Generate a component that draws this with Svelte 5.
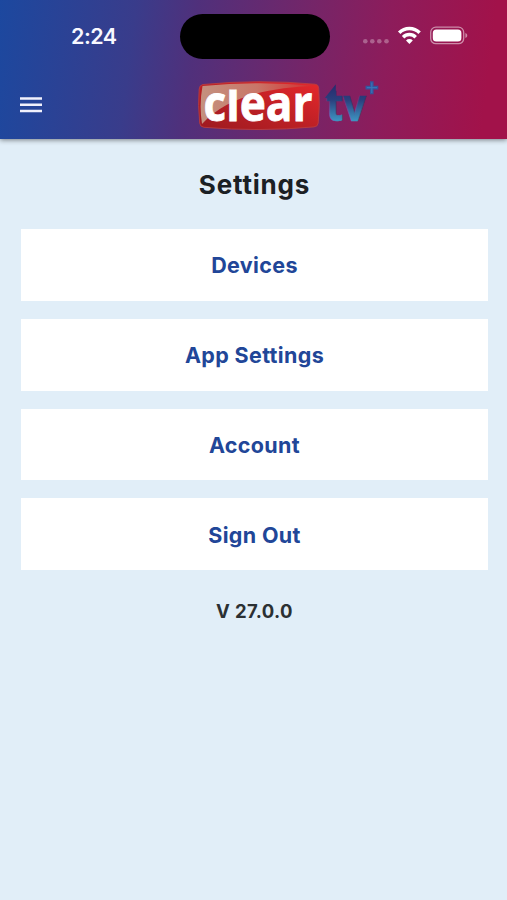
<script>
  const items = ['Devices', 'App Settings', 'Account', 'Sign Out'];
</script>

<div class="screen">
  <header>
    <div class="status">
      <div class="time">2:24</div>
      <div class="island"></div>
      <svg class="indicators" width="106" height="24" viewBox="362 24 106 24" aria-hidden="true">
        <g fill="#fff" opacity=".3">
          <circle cx="365.3" cy="41.3" r="2.3" /><circle cx="372.3" cy="41.3" r="2.3" />
          <circle cx="379.3" cy="41.3" r="2.3" /><circle cx="386.5" cy="41.3" r="2.3" />
        </g>
        <g fill="none" stroke="#fff" stroke-width="3.5">
          <path d="M399.2 32.7a14.4 14.4 0 0 1 20.4 0" />
          <path d="M403.1 37.2a8.9 8.9 0 0 1 12.6 0" />
        </g>
        <path d="M409.4 44l-3.4-3.5a4.8 4.8 0 0 1 6.8 0z" fill="#fff" />
        <rect x="430.7" y="27.1" width="33" height="16.6" rx="5.2" fill="none" stroke="#fff" stroke-opacity=".5" stroke-width="1.3" />
        <rect x="432.8" y="29.4" width="28.6" height="12" rx="3.5" fill="#fff" />
        <path d="M465.4 33c2.5.8 2.5 4.2 0 5z" fill="#fff" opacity=".5" />
      </svg>
    </div>
    <div class="bar">
      <button class="menu" aria-label="Menu">
        <svg width="22" height="16" viewBox="0 0 22 16" aria-hidden="true">
          <path d="M0 1.6h22M0 7.8h22M0 14h22" stroke="#f1f1fc" stroke-width="2.5" />
        </svg>
      </button>
      <svg class="logo" width="184" height="76" viewBox="196 63 184 76" role="img" aria-label="clear tv+">
        <defs>
          <linearGradient id="red" x1="0" y1="1" x2="1" y2="0">
            <stop offset="0" stop-color="#9d1a20" /><stop offset=".5" stop-color="#bd2025" /><stop offset="1" stop-color="#e6282c" />
          </linearGradient>
          <linearGradient id="gloss" x1="0" y1="0" x2="1" y2="0">
            <stop offset="0" stop-color="#c4917f" /><stop offset=".5" stop-color="#c97668" /><stop offset="1" stop-color="#d32c2d" />
          </linearGradient>
          <linearGradient id="blue" gradientUnits="userSpaceOnUse" x1="0" y1="86" x2="0" y2="122">
            <stop offset="0" stop-color="#282c6e" /><stop offset=".38" stop-color="#2a3f7d" /><stop offset="1" stop-color="#3e98c5" />
          </linearGradient>
          <clipPath id="letters"><rect x="200" y="89.5" width="118" height="36" /></clipPath>
        </defs>
        <path d="M203 84.5Q259 79 315 84.2Q318.5 84.5 318.7 88Q320.2 105 318.2 123Q318 126.5 314 126.9Q259 132 204 127.3Q200 127 199.7 123Q197.8 105 199.2 89Q199.5 85 203 84.5Z" fill="url(#red)" stroke="#ba3c40" stroke-width=".9" />
        <path d="M202.5 86Q259 80.5 314 85.8C274 88 229 94 202 124Q199 105 202.5 86Z" fill="url(#gloss)" />
        <g clip-path="url(#letters)">
          <text x="203.5" y="120.7" textLength="109" lengthAdjust="spacingAndGlyphs" class="clear">clear</text>
        </g>
        <text x="326" y="121" textLength="40" lengthAdjust="spacingAndGlyphs" class="tv">tv</text>
        <path d="M324.8 98L335.8 84.3V99Z" fill="url(#blue)" />
        <path d="M371.8 81.3v13M365.5 87.6h12.8" stroke="#35549c" stroke-width="3.6" />
        <path d="M371.8 82.5v10.5M366.8 87.6h10.2" stroke="#3974b7" stroke-width="1.2" />
      </svg>
    </div>
  </header>
  <main>
    <h1>Settings</h1>
    <nav>
      {#each items as item}
        <button class="item">{item}</button>
      {/each}
    </nav>
    <p>V 27.0.0</p>
  </main>
</div>

<style>
  :global(body) { margin: 0; }
  .screen { width: 507px; height: 900px; overflow: hidden; background: #e1eef8; font-family: Inter, sans-serif; display: flex; flex-direction: column; }
  header { height: 138.5px; flex: none; background: linear-gradient(97deg, #1c489f 0%, #393c8b 26%, #50307b 38%, #752568 60%, #8d1c5b 75%, #a2124a 95%); box-shadow: 0 1px 5px rgba(0, 0, 0, .48); }
  .status { height: 72px; display: flex; box-sizing: border-box; padding: 14px 39px 0 71px; }
  .time { width: 109px; color: #f8f8ff; font-size: 21.5px; font-weight: 600; line-height: 45px; letter-spacing: -.5px; }
  .island { width: 150px; height: 45px; border-radius: 23px; background: #000; }
  .indicators { margin: 10px 0 0 32px; flex: none; }
  .bar { height: 66px; display: flex; align-items: flex-start; }
  .menu { border: 0; background: none; padding: 0; margin: 25px 154px 0 20px; width: 22px; height: 16px; display: flex; }
  .logo { margin-top: -9px; flex: none; }
  .clear { font: 700 51px "Open Sans", sans-serif; fill: #fff; stroke: #fff; stroke-width: .8px; }
  .tv { font: 700 45px "Open Sans", sans-serif; fill: url(#blue); stroke: url(#blue); stroke-width: .6px; }
  main { display: flex; flex-direction: column; align-items: center; padding: 29px 19px 0 21px; }
  h1 { margin: 0; font-size: 26px; line-height: 34px; font-weight: 700; letter-spacing: .8px; color: #1b2024; }
  nav { width: 467px; margin-top: 27.9px; display: flex; flex-direction: column; gap: 18px; }
  .item { height: 71.7px; padding: .5px 0 0 0; border: 0; background: #fff; color: #214698; font: 700 21.5px Inter, sans-serif; letter-spacing: .35px; }
  p { margin: 29px 0 0; font-size: 18.5px; line-height: 24px; font-weight: 700; letter-spacing: .35px; color: #2b3033; }
</style>
